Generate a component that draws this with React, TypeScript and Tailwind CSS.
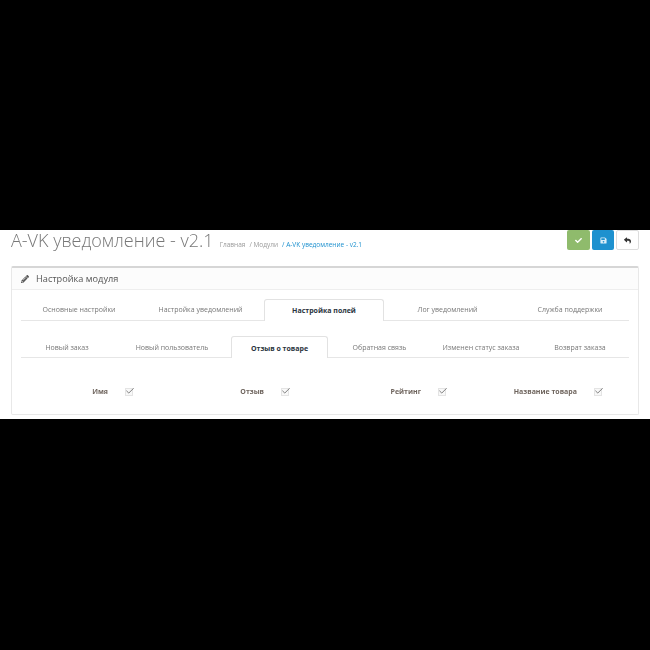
import React from 'react'
import { Check } from 'lucide-react'
import { FaCheck, FaPencilAlt, FaReply, FaSave } from 'react-icons/fa'

const mainTabs = ['Основные настройки', 'Настройка уведомлений', 'Настройка полей', 'Лог уведомлений', 'Служба поддержки']
const subTabs = ['Новый заказ', 'Новый пользователь', 'Отзыв о товаре', 'Обратная связь', 'Изменен статус заказа', 'Возврат заказа']
const fields = ['Имя', 'Отзыв', 'Рейтинг', 'Название товара']

const Tab: React.FC<{ label: string; active: boolean; sub?: boolean }> = ({ label, active, sub }) => (
  <div
    className={
      (sub ? 'pt-[4px] ' : 'pt-[2px] ') +
      (active
        ? 'flex items-center justify-center h-[22px] bg-white border border-b-0 border-[#e2e2e2] rounded-t-[3px] font-bold text-[#2a3440] -mb-px z-10'
        : 'flex items-center justify-center h-[21px] self-end text-[#777777]')
    }
  >
    {label}
  </div>
)

const Field: React.FC<{ label: string }> = ({ label }) => (
  <div className="flex items-center justify-end">
    <span className="text-[7px] font-bold text-[#6f655e]">{label}</span>
    <span className="relative ml-[17px] mr-[4px] w-[8px] h-[8px] bg-[#f8f8f8] border border-[#e4e4e4]">
      <Check strokeWidth={2} className="absolute -left-[1px] -top-[3px] w-[10px] h-[10px] text-[#666666]" />
    </span>
  </div>
)

const App: React.FC = () => {
  return (
    <div className="w-[650px] h-[650px] bg-black flex flex-col font-['Open_Sans',sans-serif]">
      <div className="h-[230px]" />
      <div className="h-[189px] bg-white overflow-hidden">
        <div className="px-[11px] blur-[0.3px]">
          <div className="flex items-start justify-between h-[36px]">
            <div className="flex items-baseline">
              <h1 className="text-[18px] leading-[20px] font-light text-[#777777]">A-VK уведомление - v2.1</h1>
              <div className="flex ml-[6px] text-[6.5px] gap-[4px] text-[#999999]">
                <span>Главная</span>
                <span>/ Модули</span>
                <span className="text-[#1e91cf]">/ A-VK уведомление - v2.1</span>
              </div>
            </div>
            <div className="flex gap-[2px]">
              <button className="w-[23px] h-[20px] flex items-center justify-center bg-[#8fbb6c] rounded-[2px] text-white">
                <FaCheck className="w-[7px] h-[7px]" />
              </button>
              <button className="w-[22px] h-[20px] flex items-center justify-center bg-[#1e91cf] rounded-[2px] text-[#d9edf8]">
                <FaSave className="w-[7px] h-[7px]" />
              </button>
              <button className="w-[23px] h-[20px] flex items-center justify-center bg-white border border-[#dddddd] rounded-[2px] text-[#333333]">
                <FaReply className="w-[7px] h-[7px]" />
              </button>
            </div>
          </div>
          <div className="h-[149px] border border-[#e8e8e8] border-t-2 border-t-[#d6d6d6] rounded-[2px]">
            <div className="h-[22px] flex items-center pl-[9px] bg-[#fcfcfc] border-b border-[#eeeeee] text-[#555555]">
              <FaPencilAlt className="w-[8px] h-[8px] mr-[7px]" />
              <span className="text-[9.2px]">Настройка модуля</span>
            </div>
            <div className="px-[9px] pt-[9px] text-[7px]">
              <div className="grid grid-cols-[116px_127px_120px_127px_118px] border-b border-[#e6e6e6]">
                {mainTabs.map((t, i) => (
                  <Tab key={t} label={t} active={i === 2} />
                ))}
              </div>
              <div className="grid grid-cols-[92px_118px_97px_103px_100px_98px] mt-[15px] border-b border-[#e6e6e6]">
                {subTabs.map((t, i) => (
                  <Tab key={t} label={t} active={i === 2} sub />
                ))}
              </div>
              <div className="grid grid-cols-[116px_156px_157px_156px] mt-[29px]">
                {fields.map((f) => (
                  <Field key={f} label={f} />
                ))}
              </div>
            </div>
          </div>
        </div>
      </div>
    </div>
  )
}

export default App
